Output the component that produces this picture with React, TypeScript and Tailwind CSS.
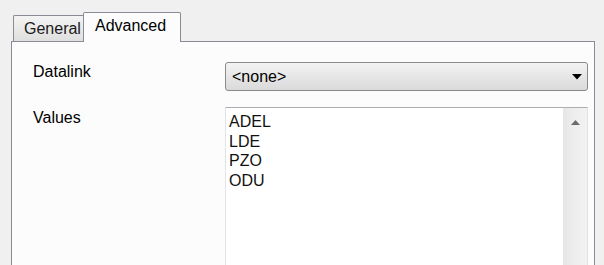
import React from 'react';

const values = ['ADEL', 'LDE', 'PZO', 'ODU'];

const App = () => {
  return (
    <div className="w-[604px] h-[265px] overflow-hidden bg-[#f0f0f0] font-['Liberation_Sans',Arial,sans-serif] text-[16px] leading-[18px] text-black">
      {/* tab strip */}
      <div className="relative z-10 -mb-px flex items-end pl-[13px] pt-[12px]">
        <div className="mb-px h-[26px] w-[70px] rounded-tl-[2px] border-l border-t border-[#898c95] bg-gradient-to-b from-[#f4f4f4] to-[#dfdfdf] pl-[10px] pt-[4px] text-[#1a1a1a]">
          General
        </div>
        <div className="h-[30px] w-[98px] rounded-t-[2px] border-l border-r border-t border-[#898c95] bg-[#fcfcfc] pl-[11px] pt-[4px]">
          Advanced
        </div>
      </div>

      {/* page */}
      <div className="ml-[11px] h-[260px] w-[584px] border border-[#898c95] bg-[#fcfcfc] pl-[21px] pt-[20px]">
        <div className="flex">
          <div className="w-[192px] pt-px">Datalink</div>
          <div className="flex h-[29px] w-[363px] items-center justify-between rounded-[3px] border border-[#8a8a8a] bg-gradient-to-b from-[#f3f3f3] to-[#dadada] pl-[6px] pr-[5px]">
            <span>&lt;none&gt;</span>
            <svg width="10" height="6" viewBox="0 0 10 6">
              <path d="M0 0 L10 0 L5 5.5 Z" fill="#000" />
            </svg>
          </div>
        </div>

        <div className="mt-[16px] flex">
          <div className="w-[192px] pt-[2px]">Values</div>
          <div className="flex h-[170px] w-[363px] border border-[#e2e3ea] border-t-[#abadb3] bg-white">
            <div className="flex-1 pl-[3px] pt-[4px] leading-[19.5px] text-[#111]">
              {values.map((v) => (
                <div key={v}>{v}</div>
              ))}
            </div>
            <div className="flex w-[24px] justify-center bg-gradient-to-r from-[#e6e6e6] via-[#eeeeee] to-[#f2f2f2] pt-[12px]">
              <svg width="9" height="5" viewBox="0 0 9 5">
                <path d="M0 5 L9 5 L4.5 0 Z" fill="#6b6b6b" />
              </svg>
            </div>
          </div>
        </div>
      </div>
    </div>
  );
};

export default App;
